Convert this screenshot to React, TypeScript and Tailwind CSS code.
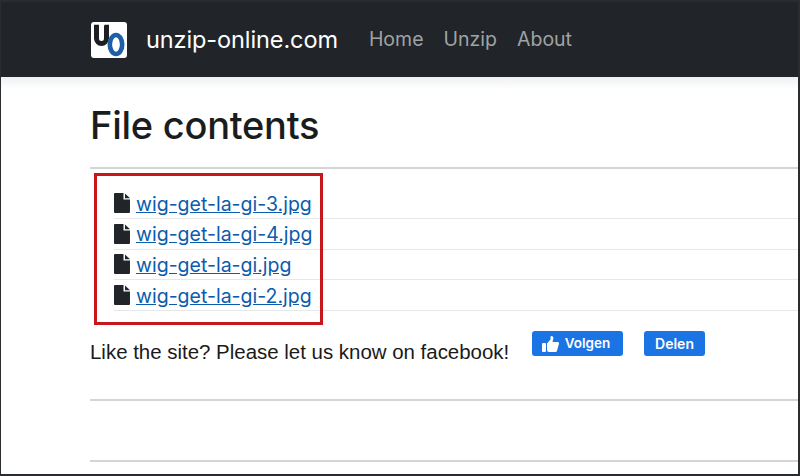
import React from "react";

const files = ["wig-get-la-gi-3.jpg", "wig-get-la-gi-4.jpg", "wig-get-la-gi.jpg", "wig-get-la-gi-2.jpg"];

function FileIcon() {
  return (
    <svg width="16" height="20" viewBox="0 0 16 20" className="shrink-0">
      <path d="M1 0H9.5V6.5H16V19a1 1 0 0 1-1 1H1a1 1 0 0 1-1-1V1a1 1 0 0 1 1-1Z" fill="#212529" />
      <path d="M11 0.5L16 5.2H11Z" fill="#212529" />
    </svg>
  );
}

function Logo() {
  return (
    <svg width="36" height="36" viewBox="0 0 36 36" className="shrink-0">
      <rect width="36" height="36" rx="3" fill="#fff" />
      <path d="M5.5 3.5V16.5a5 5 0 0 0 10 0V3.5" fill="none" stroke="#1c1e21" strokeWidth="5" />
      <path d="M3 3.5H8M13.5 3.5H18" stroke="#1c1e21" strokeWidth="1.5" />
      <ellipse cx="25" cy="22.5" rx="6.2" ry="9.5" fill="none" stroke="#1f5fa8" strokeWidth="4.6" />
    </svg>
  );
}

function ThumbIcon() {
  return (
    <svg width="17" height="16" viewBox="0 0 17 16" className="shrink-0">
      <rect x="0" y="7" width="4" height="9" rx="1" fill="#fff" />
      <path d="M5 7.5L8.5 3.5V1a1 1 0 0 1 1-1c1.8 0 2.2 2 1.6 3.5L10.5 6H15.5a1.5 1.5 0 0 1 1.4 1.9L15 14.8A1.6 1.6 0 0 1 13.5 16H7a2 2 0 0 1-2-2Z" fill="#fff" />
    </svg>
  );
}

export default function App() {
  return (
    <div className="relative flex h-[476px] w-[800px] flex-col overflow-hidden border-t-2 border-r-2 border-b-2 border-l border-[#2a2c2f] bg-white font-['Inter','Liberation_Sans',sans-serif] text-[#212529]">
      <header className="flex h-[75px] shrink-0 items-center bg-[#212529] pl-[90px]">
        <Logo />
        <span className="ml-[19px] text-[23.5px] tracking-[-0.1px] text-white">unzip-online.com</span>
        <nav className="ml-[31px] flex gap-[20px] text-[19.5px] text-[#a0a2a4]">
          <span>Home</span>
          <span>Unzip</span>
          <span>About</span>
        </nav>
      </header>
      <div className="h-3 shrink-0 bg-gradient-to-b from-[#eef0f3] to-white" />
      <main className="flex flex-1 flex-col pl-[89px]">
        <h1 className="mt-[13px] text-[38px] leading-[47px] font-medium tracking-[-0.25px] text-[#1a1d20]">File contents</h1>
        <hr className="mt-[18px] border-t-2 border-[#d4d5d6]" />
        <ul className="mt-[19px] pl-[24px]">
          {files.map((f) => (
            <li key={f} className="flex h-[30.75px] items-center gap-[6px] border-b border-[#e6e7e8]">
              <FileIcon />
              <a href="#" className="pt-[1.5px] text-[19.5px] leading-[26px] text-[#0b5cad] underline">{f}</a>
            </li>
          ))}
        </ul>
        <div className="mt-[20px] flex items-start">
          <p className="mt-[9px] w-[442px] font-['Liberation_Sans',sans-serif] text-[20.45px] leading-[24px] whitespace-nowrap text-[#1a1a1a]">Like the site? Please let us know on facebook!</p>
          <div className="flex h-[25px] w-[91px] items-center justify-center gap-[6px] rounded-[3px] bg-[#1b74e4] pr-[3px] text-[13.5px] font-semibold text-white">
            <ThumbIcon />
            <span>Volgen</span>
          </div>
          <div className="ml-[21px] flex h-[25px] w-[61px] items-center justify-center rounded-[3px] bg-[#1b74e4] text-[14px] font-semibold text-white">Delen</div>
        </div>
        <hr className="mt-[35px] border-t-2 border-[#d4d5d6]" />
        <hr className="mt-[59px] border-t-2 border-[#d4d5d6]" />
      </main>
      <div className="absolute top-[171px] left-[93px] h-[152px] w-[229px] border-[3px] border-[#c8161d]" />
    </div>
  );
}
